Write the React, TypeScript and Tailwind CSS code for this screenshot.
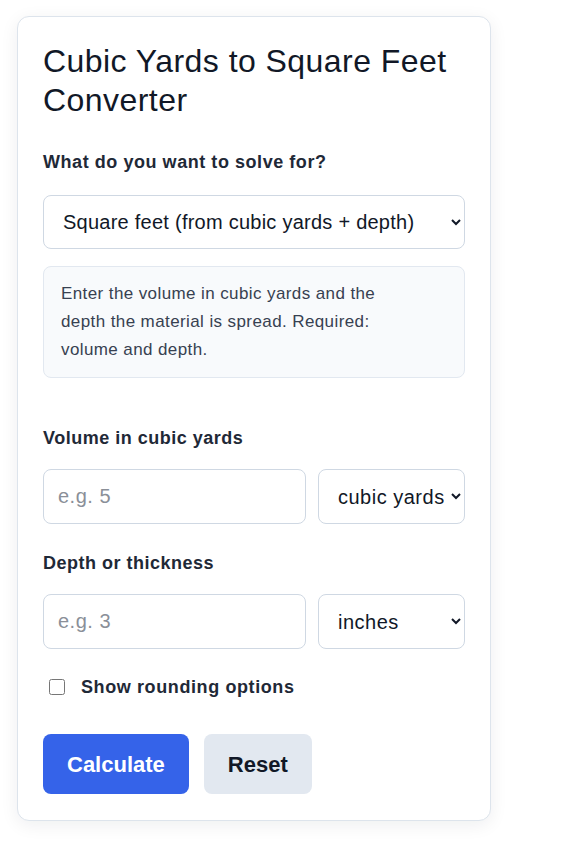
import { useState } from 'react';

export default function App() {
  const [mode, setMode] = useState('sqft');
  const [volume, setVolume] = useState('');
  const [volUnit, setVolUnit] = useState('cy');
  const [depth, setDepth] = useState('');
  const [depthUnit, setDepthUnit] = useState('in');
  const [rounding, setRounding] = useState(false);

  return (
    <div className="min-h-screen bg-white px-[17px] pt-4 font-[family-name:Liberation_Sans,Arial,sans-serif] text-[#1f2937]">
      <div className="w-[474px] rounded-xl border border-[#dde4ec] bg-white px-[25px] pt-[25px] pb-[26px] shadow-[0_4px_18px_rgba(15,23,42,0.07)]">
        <h1 className="text-[32px] leading-[39px] font-normal tracking-[0.45px] text-[#111827]">
          Cubic Yards to Square Feet Converter
        </h1>

        <label className="mt-[30px] block text-[18px] font-bold leading-6 tracking-[0.55px]">What do you want to solve for?</label>
        <select
          value={mode}
          onChange={(e) => setMode(e.target.value)}
          className="mt-[21px] block h-[54px] w-full rounded-lg border border-[#cfd8e3] bg-white px-[15px] text-[20px] tracking-[0.25px] text-[#111827]"
        >
          <option value="sqft">Square feet (from cubic yards + depth)</option>
          <option value="cy">Cubic yards (from square feet + depth)</option>
        </select>

        {/* Help text */}
        <div className="mt-[17px] rounded-lg border border-[#e2e8f0] bg-[#f8fafc] pl-[17px] pr-[40px] py-[13px] text-[17px] leading-[28px] tracking-[0.4px] text-[#374151]">
          Enter the volume in cubic yards and the depth the material is spread. Required: volume and depth.
        </div>

        <label className="mt-[48px] block text-[18px] font-bold leading-6 tracking-[0.5px]">Volume in cubic yards</label>
        <div className="mt-[19px] flex gap-3">
          <input
            type="text"
            value={volume}
            onChange={(e) => setVolume(e.target.value)}
            placeholder="e.g. 5"
            className="h-[55px] min-w-0 flex-1 rounded-lg border border-[#cfd8e3] px-[14px] text-[20px] tracking-[0.5px] placeholder-[#8a8f98] outline-none"
          />
          <select
            value={volUnit}
            onChange={(e) => setVolUnit(e.target.value)}
            className="h-[55px] w-[147px] rounded-lg border border-[#cfd8e3] bg-white pl-[15px] pr-1 text-[20px] tracking-[0.5px] text-[#111827]"
          >
            <option value="cy">cubic yards</option>
            <option value="cf">cubic feet</option>
          </select>
        </div>

        <label className="mt-[27px] block text-[18px] font-bold leading-6 tracking-[0.5px]">Depth or thickness</label>
        <div className="mt-[19px] flex gap-3">
          <input
            type="text"
            value={depth}
            onChange={(e) => setDepth(e.target.value)}
            placeholder="e.g. 3"
            className="h-[55px] min-w-0 flex-1 rounded-lg border border-[#cfd8e3] px-[14px] text-[20px] tracking-[0.5px] placeholder-[#8a8f98] outline-none"
          />
          <select
            value={depthUnit}
            onChange={(e) => setDepthUnit(e.target.value)}
            className="h-[55px] w-[147px] rounded-lg border border-[#cfd8e3] bg-white pl-[15px] pr-1 text-[20px] tracking-[0.5px] text-[#111827]"
          >
            <option value="in">inches</option>
            <option value="ft">feet</option>
          </select>
        </div>

        <label className="mt-[26px] flex items-center gap-4 pl-[6px] text-[18px] leading-6 font-bold tracking-[0.6px]">
          <input
            type="checkbox"
            checked={rounding}
            onChange={(e) => setRounding(e.target.checked)}
            className="h-4 w-4"
          />
          Show rounding options
        </label>

        <div className="mt-[35px] flex gap-[15px]">
          <button className="h-[60px] rounded-lg bg-[#3563e9] px-6 text-[22px] font-bold text-white">
            Calculate
          </button>
          <button className="h-[60px] rounded-lg bg-[#e2e8f0] px-6 text-[22px] font-bold text-[#111827]">
            Reset
          </button>
        </div>
      </div>
    </div>
  );
}
